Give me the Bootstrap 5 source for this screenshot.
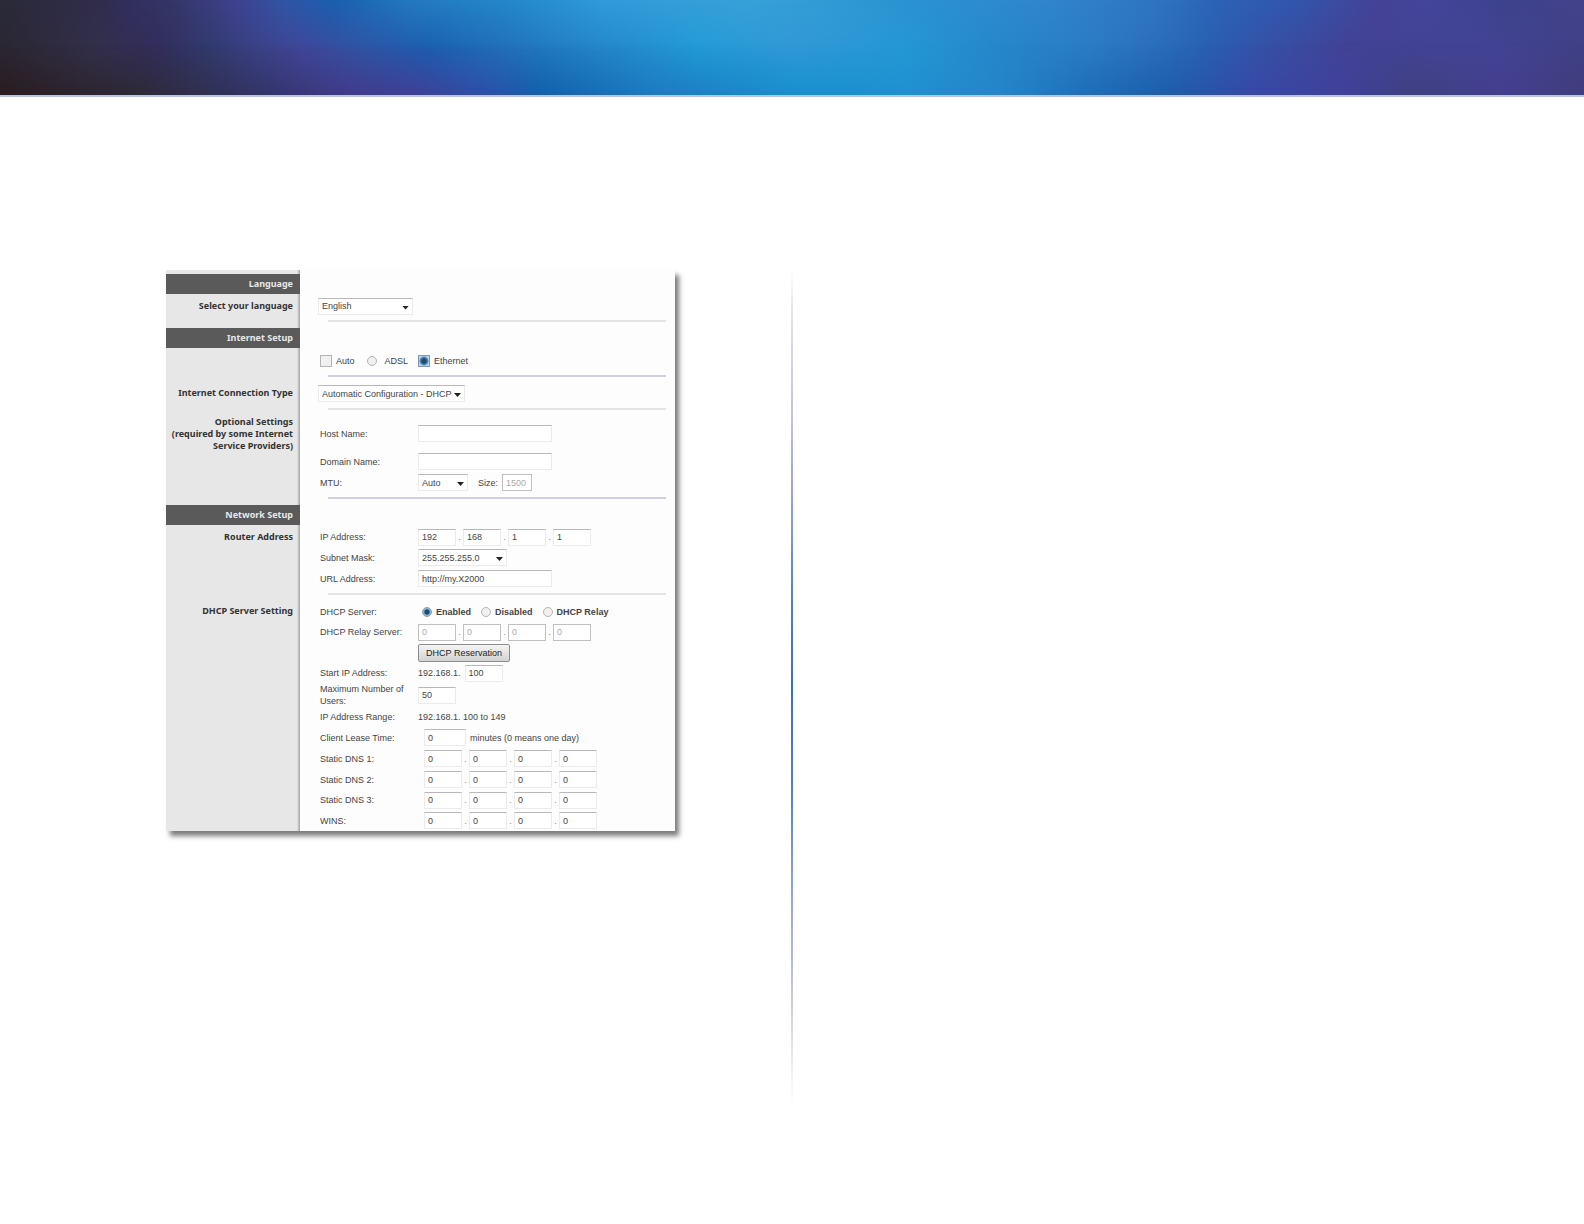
<!DOCTYPE html>
<html lang="en">
<head>
<meta charset="utf-8">
<meta name="viewport" content="width=device-width, initial-scale=1">
<title>Basic Setup</title>
<link href="https://cdn.jsdelivr.net/npm/bootstrap@5.3.0/dist/css/bootstrap.min.css" rel="stylesheet">
<script src="https://cdn.jsdelivr.net/npm/bootstrap@5.3.0/dist/js/bootstrap.bundle.min.js"></script>
<style>
body{background:#fff;color:#444;font-family:"Liberation Sans",Arial,sans-serif}
/* banner: three colour bands faded into each other from top to bottom */
.banner{height:97px;border-bottom:2px solid #b9c4e2;background:linear-gradient(90deg,#2a2732 0%,#33304c 6%,#332d5c 10%,#303a6c 13%,#3a4185 16%,#42469a 19%,#2f55a5 23%,#1a5eb0 27%,#2270ba 32%,#2487c8 38%,#219cd6 44%,#3299d6 50%,#2499d5 57%,#2587cb 63%,#2b7cc4 69%,#2b6ebb 73%,#2861b3 76%,#3650a5 80%,#424296 85%,#434494 94%,#3f4086 100%)}
.banner::before,.banner::after{content:"";position:absolute;inset:0}
.banner::before{background:linear-gradient(90deg,#2a2a38 0%,#302c4a 6%,#312e5c 8%,#343668 11%,#3f4290 15%,#3055a5 18%,#1a5fae 21%,#2379bf 26%,#2387c8 32%,#2f9bd8 38%,#37a0d8 47%,#329cd6 51%,#2a93d0 57%,#3085cc 66%,#2f74c0 73%,#2c62b5 77%,#3255ab 82%,#454296 87%,#43459b 90%,#3d428c 95%,#43428a 100%);-webkit-mask-image:linear-gradient(#000,transparent 55%);mask-image:linear-gradient(#000,transparent 55%)}
.banner::after{background:linear-gradient(90deg,#2a1c20 0%,#2d2a38 9%,#33356a 17%,#413a8a 22%,#403f96 26%,#2b50a8 31%,#1160a8 34%,#1d78c0 41%,#1690cd 50%,#1f90d0 57%,#2585c8 63%,#1e6cb5 69%,#1d5ca8 74%,#3848a5 79%,#40409a 85%,#3f4080 89%,#433f90 95%,#403d7a 100%);-webkit-mask-image:linear-gradient(transparent 45%,#000);mask-image:linear-gradient(transparent 45%,#000)}
.sheet{padding-top:173px;padding-bottom:119px}
.leaf{padding-left:166px;padding-right:117px}
.divide{width:2px;height:835px;margin-left:-1px;background:linear-gradient(#fff,#e2e2ea 5%,#c5bfdd 18%,#8ea3cd 28%,#5580b5 40%,#3a72ab 50%,#5681b9 62%,#93a8d0 75%,#c3c3dc 86%,#ececf0 95%,#fff)}
.panel{background:#fdfdfd;box-shadow:4px 5px 5px rgba(0,0,0,.52);font-size:9px;line-height:12px;padding-top:4px;overflow:hidden;background-image:linear-gradient(90deg,#e7e7e7 131px,#cfcfcf 132px,#a2a2a2 134px,transparent 134px)}
.side{width:134px;padding-right:7px;text-align:right;flex:none;font-family:"Noto Sans",sans-serif;font-weight:700;color:#333}
.head{background:#5a5a5a;color:#e8e8e8;line-height:20px}
.side .line{display:block;line-height:20px}
.side.notes{padding-top:6px}
.fields{padding:0 9px 0 20px}
.line{display:flex;align-items:center;height:21px}
.line.short{height:20px}
.lead-2{padding-top:2px}
.lead-6{padding-top:6px}
.tail-6{padding-bottom:6px}
.host{margin:13px 0 7px}
.name{width:98px;flex:none}
.in6{padding-left:6px}
.rule{height:2px;margin:4px 0 0 8px;border:0;opacity:1;background:#e4e4e6}
.rule.blue{background:#d0d0de}
.box{height:17px;padding:0 3px;border:1px solid #ebebeb;border-top-color:#b8b8b8;border-radius:0;background:#fff;color:#444;font-size:9px;line-height:14px;min-width:0}
.box:disabled{border-color:#c0c0c0;color:#aaa;background:#fff}
.wide{width:134px}
.octet{width:38px}
.lease{width:42px}
.mtu{width:30px}
.dot{width:7px;text-align:center;color:#888}
.pick{position:relative}
.pick select{appearance:none;width:100%}
.pick::after{content:"";position:absolute;right:4px;top:8px;width:7px;height:4px;background:#222;clip-path:polygon(0 0,100% 0,50% 100%);pointer-events:none}
.pull{margin-left:-2px}
.w-lang{width:95px}.w-type{width:147px}.w-mtu{width:50px}.w-mask{width:89px}
.tick{appearance:none;flex:none;margin:0;width:10px;height:10px;border:1px solid #b4b4b4;border-radius:50%;background:#f0f0f0}
.tick.square{width:12px;height:12px;border-radius:0}
.tick:checked{border-color:#8a9dab;background:radial-gradient(circle,#1d4a75 0 2px,#6f9fc4 3px,#dbe8f0 5px)}
.tick.square:checked{border-color:#7e9bb5;background:radial-gradient(circle,#1d4a75 0 2px,#5f92bc 4px,#bcd4e6 5px)}
.gap-10{margin-left:10px}
.gap-12{margin-left:12px}
.reserve{height:18px;width:92px;padding:0;border:1px solid #8c8c8c;border-radius:2px;background:linear-gradient(#f5f5f5,#d2d2d2);font-size:9px;line-height:14px;color:#222}
</style>
</head>
<body>
<header class="banner position-relative"></header>
<main class="sheet d-flex">
<div class="leaf col-6">
<form class="panel">
<section>
  <div class="side head">Language</div>
  <div class="d-flex lead-2">
    <div class="side"><label class="line" for="lang">Select your language</label></div>
    <div class="fields flex-grow-1 tail-6">
      <div class="line short"><span class="pick pull w-lang"><select id="lang" class="box"><option>English</option></select></span></div>
      <hr class="rule">
    </div>
  </div>
</section>
<section>
  <div class="side head">Internet Setup</div>
  <div class="d-flex">
    <div class="side"></div>
    <div class="fields flex-grow-1 lead-2">
      <div class="line">
        <input class="tick square" type="checkbox" id="auto"><label class="ms-1" for="auto">Auto</label>
        <input class="tick gap-12" type="radio" name="link" id="adsl"><label class="ms-1 ps-1" for="adsl">ADSL</label>
        <input class="tick square gap-10" type="radio" name="link" id="eth" checked><label class="ms-1" for="eth">Ethernet</label>
      </div>
      <hr class="rule blue">
    </div>
  </div>
  <div class="d-flex lead-6">
    <div class="side"><label class="line" for="ctype">Internet Connection Type</label></div>
    <div class="fields flex-grow-1">
      <div class="line"><span class="pick pull w-type"><select id="ctype" class="box"><option>Automatic Configuration - DHCP</option></select></span></div>
      <hr class="rule">
    </div>
  </div>
  <div class="d-flex">
    <div class="side notes">Optional Settings<br>(required by some Internet<br>Service Providers)</div>
    <div class="fields flex-grow-1 tail-6">
      <div class="line host"><label class="name" for="host">Host Name:</label><input id="host" class="box wide"></div>
      <div class="line"><label class="name" for="dom">Domain Name:</label><input id="dom" class="box wide"></div>
      <div class="line"><label class="name" for="mtu">MTU:</label><span class="pick w-mtu"><select id="mtu" class="box"><option>Auto</option></select></span><label class="gap-10 me-1" for="size">Size:</label><input id="size" class="box mtu" value="1500" disabled></div>
      <hr class="rule blue">
    </div>
  </div>
</section>
<section>
  <div class="side head">Network Setup</div>
  <div class="d-flex lead-2">
    <div class="side"><div class="line">Router Address</div></div>
    <div class="fields flex-grow-1">
      <div class="line short"><span class="name">IP Address:</span><input class="box octet" aria-label="IP 1" value="192"><span class="dot">.</span><input class="box octet" aria-label="IP 2" value="168"><span class="dot">.</span><input class="box octet" aria-label="IP 3" value="1"><span class="dot">.</span><input class="box octet" aria-label="IP 4" value="1"></div>
      <div class="line"><label class="name" for="mask">Subnet Mask:</label><span class="pick w-mask"><select id="mask" class="box"><option>255.255.255.0</option></select></span></div>
      <div class="line"><label class="name" for="url">URL Address:</label><input id="url" class="box wide" value="http://my.X2000"></div>
      <hr class="rule">
    </div>
  </div>
  <div class="d-flex lead-6">
    <div class="side"><div class="line">DHCP Server Setting</div></div>
    <div class="fields flex-grow-1">
      <div class="line"><span class="name">DHCP Server:</span><span class="d-flex align-items-center fw-bold ps-1"><input class="tick" type="radio" name="dhcp" id="en" checked><label class="ms-1" for="en">Enabled</label><input class="tick gap-10" type="radio" name="dhcp" id="dis"><label class="ms-1" for="dis">Disabled</label><input class="tick gap-10" type="radio" name="dhcp" id="rel"><label class="ms-1" for="rel">DHCP Relay</label></span></div>
      <div class="line short"><span class="name">DHCP Relay Server:</span><input class="box octet" aria-label="Relay 1" value="0" disabled><span class="dot">.</span><input class="box octet" aria-label="Relay 2" value="0" disabled><span class="dot">.</span><input class="box octet" aria-label="Relay 3" value="0" disabled><span class="dot">.</span><input class="box octet" aria-label="Relay 4" value="0" disabled></div>
      <div class="line"><span class="name"></span><button type="button" class="reserve">DHCP Reservation</button></div>
      <div class="line short"><label class="name" for="start">Start IP Address:</label><span class="pe-1">192.168.1.</span><input id="start" class="box octet" value="100"></div>
      <div class="d-flex align-items-center"><label class="name" for="users">Maximum Number of Users:</label><input id="users" class="box octet" value="50"></div>
      <div class="line short"><span class="name">IP Address Range:</span>192.168.1. 100 to 149</div>
      <div class="line"><label class="name" for="leaset">Client Lease Time:</label><span class="in6"></span><input id="leaset" class="box lease" value="0"><span class="ms-1">minutes (0 means one day)</span></div>
      <div class="line"><span class="name">Static DNS 1:</span><span class="in6"></span><input class="box octet" aria-label="DNS 1 a" value="0"><span class="dot">.</span><input class="box octet" aria-label="DNS 1 b" value="0"><span class="dot">.</span><input class="box octet" aria-label="DNS 1 c" value="0"><span class="dot">.</span><input class="box octet" aria-label="DNS 1 d" value="0"></div>
      <div class="line"><span class="name">Static DNS 2:</span><span class="in6"></span><input class="box octet" aria-label="DNS 2 a" value="0"><span class="dot">.</span><input class="box octet" aria-label="DNS 2 b" value="0"><span class="dot">.</span><input class="box octet" aria-label="DNS 2 c" value="0"><span class="dot">.</span><input class="box octet" aria-label="DNS 2 d" value="0"></div>
      <div class="line short"><span class="name">Static DNS 3:</span><span class="in6"></span><input class="box octet" aria-label="DNS 3 a" value="0"><span class="dot">.</span><input class="box octet" aria-label="DNS 3 b" value="0"><span class="dot">.</span><input class="box octet" aria-label="DNS 3 c" value="0"><span class="dot">.</span><input class="box octet" aria-label="DNS 3 d" value="0"></div>
      <div class="line"><span class="name">WINS:</span><span class="in6"></span><input class="box octet" aria-label="WINS a" value="0"><span class="dot">.</span><input class="box octet" aria-label="WINS b" value="0"><span class="dot">.</span><input class="box octet" aria-label="WINS c" value="0"><span class="dot">.</span><input class="box octet" aria-label="WINS d" value="0"></div>
    </div>
  </div>
</section>
</form>
</div>
<div class="divide"></div>
</main>
</body>
</html>
